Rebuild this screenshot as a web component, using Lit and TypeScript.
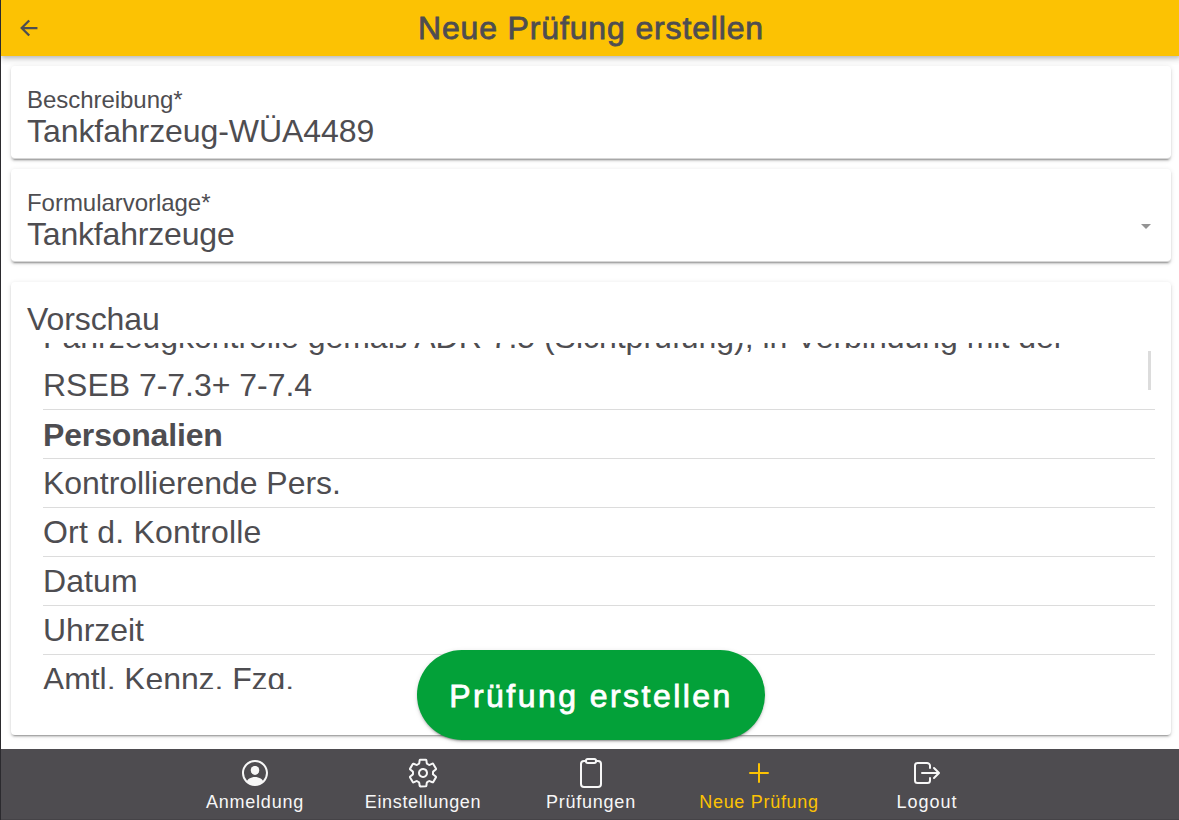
import { LitElement, html, svg, css } from 'lit';
import { customElement } from 'lit/decorators.js';
import { classMap } from 'lit/directives/class-map.js';
import { styleMap } from 'lit/directives/style-map.js';

interface PreviewRow { text: string; track: number; heading?: boolean; }
interface Tab { label: string; icon: unknown; track: number; active?: boolean; }

const rows: PreviewRow[] = [
  { text: 'Fahrzeugkontrolle gemäß ADR 7.5 (Sichtprüfung), in Verbindung mit der RSEB 7-7.3+ 7-7.4', track: -0.02 },
  { text: 'Personalien', track: -0.15, heading: true },
  { text: 'Kontrollierende Pers.', track: -0.05 },
  { text: 'Ort d. Kontrolle', track: 0.21 },
  { text: 'Datum', track: 0.1 },
  { text: 'Uhrzeit', track: -0.08 },
  { text: 'Amtl. Kennz. Fzg.', track: -0.09 },
];

const personIcon = svg`<path fill="currentColor" d="M258.9 48C141.92 46.42 46.42 141.92 48 258.9c1.56 112.19 92.91 203.54 205.1 205.1 117 1.6 212.48-93.9 210.88-210.88C462.44 140.91 371.09 49.56 258.9 48zm126.42 327.25a4 4 0 01-6.14-.32 124.27 124.27 0 00-32.35-29.59C321.37 329 289.11 320 256 320s-65.37 9-90.83 25.34a124.24 124.24 0 00-32.35 29.58 4 4 0 01-6.14.32A175.32 175.32 0 0180 259c-1.63-97.31 78.22-178.76 175.57-179S432 158.81 432 256a175.32 175.32 0 01-46.68 119.25z"/><path fill="currentColor" d="M256 144c-19.72 0-37.55 7.39-50.22 20.82s-19 32-17.57 51.93C191.11 256 221.52 288 256 288s64.83-32 67.79-71.24c1.48-19.74-4.8-38.14-17.68-51.82C293.39 151.44 275.59 144 256 144z"/>`;
const gearIcon = svg`<path class="line" d="M262.29 192.31a64 64 0 1057.4 57.4 64.13 64.13 0 00-57.4-57.4zM416.39 256a154.34 154.34 0 01-1.53 20.79l45.21 35.46a10.81 10.81 0 012.45 13.75l-42.77 74a10.81 10.81 0 01-13.14 4.59l-44.9-18.08a16.11 16.11 0 00-15.17 1.75A164.48 164.48 0 01325 400.8a15.94 15.94 0 00-8.82 12.14l-6.73 47.89a11.08 11.08 0 01-10.68 9.17h-85.54a11.11 11.11 0 01-10.69-8.87l-6.72-47.82a16.07 16.07 0 00-9-12.22 155.3 155.3 0 01-21.46-12.57 16 16 0 00-15.11-1.71l-44.89 18.07a10.81 10.81 0 01-13.14-4.58l-42.77-74a10.8 10.8 0 012.45-13.75l38.21-30a16.05 16.05 0 006-14.08c-.36-4.17-.58-8.33-.58-12.5s.21-8.27.58-12.35a16 16 0 00-6.07-13.94l-38.19-30A10.81 10.81 0 0149.48 186l42.77-74a10.81 10.81 0 0113.14-4.59l44.9 18.08a16.11 16.11 0 0015.17-1.75A164.48 164.48 0 01187 111.2a15.94 15.94 0 008.82-12.14l6.73-47.89A11.08 11.08 0 01213.23 42h85.54a11.11 11.11 0 0110.69 8.87l6.72 47.82a16.07 16.07 0 009 12.22 155.3 155.3 0 0121.46 12.57 16 16 0 0015.11 1.71l44.89-18.07a10.81 10.81 0 0113.14 4.58l42.77 74a10.8 10.8 0 01-2.45 13.75l-38.21 30a16.05 16.05 0 00-6.05 14.08c.33 4.14.55 8.3.55 12.47z"/>`;
const clipboardIcon = svg`<path class="line" d="M336 64h32a48 48 0 0148 48v320a48 48 0 01-48 48H144a48 48 0 01-48-48V112a48 48 0 0148-48h32"/><rect class="line" x="176" y="32" width="160" height="64" rx="26.13"/>`;
const addIcon = svg`<path class="line" d="M256 112v288M400 256H112"/>`;
const logoutIcon = svg`<path class="line" d="M304 336v40a40 40 0 01-40 40H104a40 40 0 01-40-40V136a40 40 0 0140-40h152c22.09 0 48 17.91 48 40v40M368 336l80-80-80-80M176 256h256"/>`;

const tabs: Tab[] = [
  { label: 'Anmeldung', icon: personIcon, track: 0.76 },
  { label: 'Einstellungen', icon: gearIcon, track: 0.63 },
  { label: 'Prüfungen', icon: clipboardIcon, track: 0.75 },
  { label: 'Neue Prüfung', icon: addIcon, track: 0.7, active: true },
  { label: 'Logout', icon: logoutIcon, track: 1 },
];

@customElement('app-root')
export class AppRoot extends LitElement {
  static styles = css`
    :host {
      display: block;
      height: 820px;
      overflow: hidden;
      box-sizing: border-box;
      border-left: 1px solid #2b2a2e;
      background: #fff;
      color: #4e4d51;
      font-family: "Liberation Sans", Arial, sans-serif;
      font-size: 32px;
    }
    .page {
      width: 1180px;
      height: 820px;
      display: flex;
      flex-direction: column;
    }
    header {
      flex: none;
      height: 56px;
      display: grid;
      grid-template-columns: 56px 1fr 56px;
      align-items: center;
      background: #fcc203;
      box-shadow: 0 2px 4px -1px rgba(0, 0, 0, .16), 0 4px 5px rgba(0, 0, 0, .11), 0 1px 10px rgba(0, 0, 0, .08);
    }
    .back { width: 24px; height: 24px; margin-left: 16px; display: block; }
    h1 {
      margin: 0;
      text-align: center;
      font-size: 32px;
      font-weight: 400;
      line-height: 56px;
      letter-spacing: .85px;
      -webkit-text-stroke: .8px currentColor;
    }
    main {
      flex: 1;
      min-height: 0;
      display: flex;
      flex-direction: column;
      padding: 10px 10px 14px;
      position: relative;
    }
    .card {
      background: #fff;
      border-radius: 4px;
      box-sizing: border-box;
      padding: 0 16px;
      box-shadow: 0 3px 1px -2px rgba(0, 0, 0, .2), 0 2px 2px rgba(0, 0, 0, .14), 0 1px 5px rgba(0, 0, 0, .12);
    }
    .field {
      height: 93px;
      flex: none;
      display: flex;
      align-items: center;
      justify-content: space-between;
      border-bottom: 1px solid #d6d6d6;
      margin-bottom: 10px;
      padding-top: 12px;
      padding-right: 20px;
    }
    .label { font-size: 24px; line-height: 26px; letter-spacing: -.04px; }
    .value { line-height: 36px; }
    .caret { width: 10px; height: 5px; display: block; margin-top: 11px; }
    .preview {
      flex: 1;
      min-height: 0;
      margin-top: 10px;
      display: flex;
      flex-direction: column;
      padding-bottom: 46px;
    }
    .preview-title {
      flex: none;
      height: 61px;
      padding-top: 13px;
      box-sizing: border-box;
      line-height: 48px;
      letter-spacing: -.1px;
    }
    .scroll { flex: 1; min-height: 0; overflow: hidden; display: flex; padding-left: 16px; }
    .rows { flex: 1; margin-top: -30px; }
    .row {
      line-height: 48px;
      border-bottom: 1px solid #dcdcdc;
    }
    .row.heading { font-weight: 700; line-height: 50px; height: 48px; }
    .thumb { flex: none; width: 3px; height: 39px; margin: 8px 4px 0 -7px; background: #dcdcdc; }
    .create {
      position: absolute;
      left: 50%;
      bottom: 9px;
      transform: translateX(-50%);
      width: 348px;
      height: 90px;
      padding: 2px 0 0;
      border: 0;
      border-radius: 45px;
      background: #03a139;
      color: #fff;
      font: 400 32px "Liberation Sans", Arial, sans-serif;
      letter-spacing: 2.45px;
      -webkit-text-stroke: .8px currentColor;
      box-shadow: 0 3px 1px -2px rgba(0, 0, 0, .2), 0 2px 2px rgba(0, 0, 0, .14), 0 1px 5px rgba(0, 0, 0, .12);
    }
    nav {
      flex: none;
      height: 71px;
      box-sizing: border-box;
      display: flex;
      justify-content: center;
      background: #4e4c50;
      border-bottom: 1px solid #454347;
      color: #f7f7f7;
    }
    .tab {
      width: 168px;
      display: flex;
      flex-direction: column;
      align-items: center;
      padding-top: 8px;
      font-size: 18px;
      line-height: 24px;
    }
    .tab span { padding-top: 1px; }
    .tab.active { color: #fcc203; }
    .tab svg { width: 32px; height: 32px; display: block; }
    .line { fill: none; stroke: currentColor; stroke-width: 32; stroke-linecap: round; stroke-linejoin: round; }
  `;

  private field(label: string, value: string, track: number, select = false) {
    return html`
      <section class="card field">
        <div>
          <div class="label">${label}</div>
          <div class="value" style=${styleMap({ letterSpacing: `${track}px` })}>${value}</div>
        </div>
        ${select ? html`<svg class="caret" viewBox="0 0 10 5"><path d="M0 0h10L5 5z" fill="#949494"/></svg>` : ''}
      </section>`;
  }

  render() {
    return html`
      <div class="page">
        <header>
          <svg class="back" viewBox="0 0 512 512"><path d="M244 400L100 256l144-144M120 256h292" fill="none" stroke="#4e4d51" stroke-width="48" stroke-linecap="square" stroke-miterlimit="10"/></svg>
          <h1>Neue Prüfung erstellen</h1>
        </header>
        <main>
          ${this.field('Beschreibung*', 'Tankfahrzeug-WÜA4489', -0.07)}
          ${this.field('Formularvorlage*', 'Tankfahrzeuge', -0.18, true)}
          <section class="card preview">
            <div class="preview-title">Vorschau</div>
            <div class="scroll">
              <div class="rows">
                ${rows.map((r) => html`<div class=${classMap({ row: true, heading: !!r.heading })} style=${styleMap({ letterSpacing: `${r.track}px` })}>${r.text}</div>`)}
              </div>
              <div class="thumb"></div>
            </div>
          </section>
          <button class="create">Prüfung erstellen</button>
        </main>
        <nav>
          ${tabs.map((t) => html`
            <div class=${classMap({ tab: true, active: !!t.active })}>
              <svg viewBox="0 0 512 512">${t.icon}</svg>
              <span style=${styleMap({ letterSpacing: `${t.track}px` })}>${t.label}</span>
            </div>`)}
        </nav>
      </div>`;
  }
}
